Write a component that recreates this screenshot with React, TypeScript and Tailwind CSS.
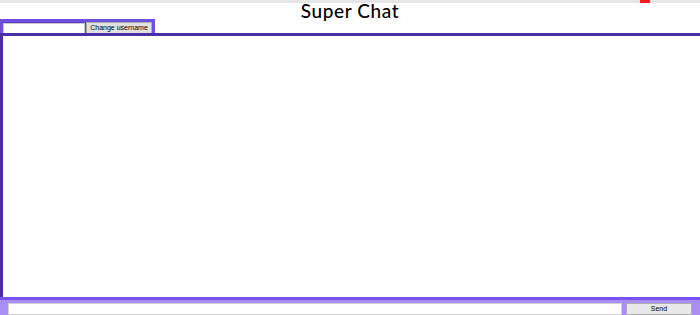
import React from "react";

export default function App() {
  return (
    <div className="w-[700px] h-[315px] flex flex-col bg-white overflow-hidden" style={{ fontFamily: "Lato, 'Open Sans', sans-serif" }}>
      <div className="h-[3px] flex bg-[#e6e6e6]">
        <div className="w-[640px]" />
        <div className="w-[10px] h-[3px] bg-[#ff1a1a]" />
      </div>
      <div className="h-[16px] flex justify-center items-center">
        <span className="text-[19px] leading-[16px] font-medium text-black tracking-[0.6px]">Super Chat</span>
      </div>
      <div className="flex">
        <div className="flex items-center gap-[1px] h-[15px] w-[155px] border-t-[3px] border-l-[3px] border-r-[3px] border-[#6f4fe0] bg-[#5c3cc8] -mb-[1px]">
          <div className="w-[82px] h-[11px] bg-white border border-[#c8c8c8]" />
          <div className="h-[12px] w-[66px] bg-[#e1e1e1] border border-[#adadad] flex items-center justify-center text-[7px] text-black" style={{ fontFamily: "'Liberation Sans', Arial, sans-serif" }}>
            Change username
          </div>
        </div>
      </div>
      <div className="flex-1 border-t-[3px] border-l-[3px] border-[#4a2fa6] bg-white" />
      <div className="h-[18px] flex items-end border-t-[3px] border-[#7b52f2] bg-[#a88ef5] pl-[8px] pr-[8px] gap-[4px]">
        <div className="h-[12px] w-[614px] bg-white border border-[#d0d0d0]" />
        <div className="h-[12px] w-[66px] bg-[#e8e8e8] border border-[#adadad] flex items-center justify-center text-[7px] text-black" style={{ fontFamily: "'Liberation Sans', Arial, sans-serif" }}>
          Send
        </div>
      </div>
    </div>
  );
}
